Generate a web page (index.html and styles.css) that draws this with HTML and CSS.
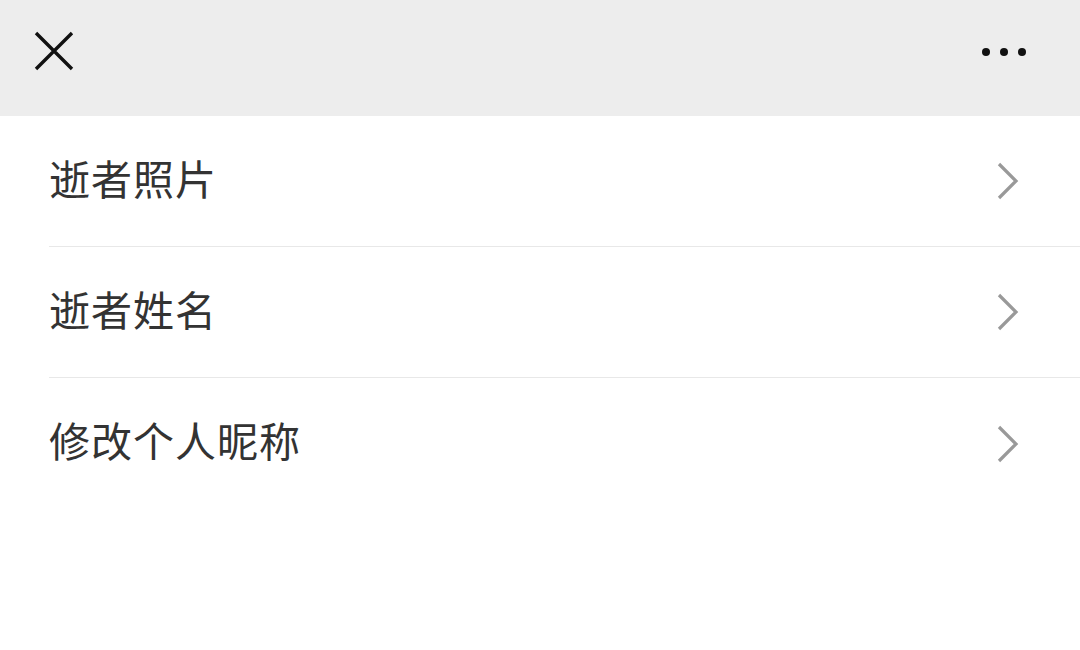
FILE: index.html
```html
<!DOCTYPE html>
<html lang="zh-CN">
<head>
  <meta charset="UTF-8">
  <meta name="viewport" content="width=device-width, initial-scale=1.0">
  <title>设置</title>
  <link rel="stylesheet" href="styles.css">
</head>
<body>
  <div class="topbar">
    <button class="close-btn" aria-label="关闭">
      <svg width="40" height="40" viewBox="0 0 40 40">
        <path d="M2 2 L38 38 M38 2 L2 38" stroke="#111" stroke-width="3.4" fill="none"/>
      </svg>
    </button>
    <button class="more-btn" aria-label="更多">
      <span class="dot"></span><span class="dot"></span><span class="dot"></span>
    </button>
  </div>

  <ul class="menu">
    <li class="menu-item">
      <span class="label">逝者照片</span>
      <svg class="arrow" width="24" height="38" viewBox="0 0 24 38">
        <path d="M3 2 L20 19 L3 36" stroke="#999" stroke-width="3.2" fill="none"/>
      </svg>
    </li>
    <li class="menu-item">
      <span class="label">逝者姓名</span>
      <svg class="arrow" width="24" height="38" viewBox="0 0 24 38">
        <path d="M3 2 L20 19 L3 36" stroke="#999" stroke-width="3.2" fill="none"/>
      </svg>
    </li>
    <li class="menu-item">
      <span class="label">修改个人昵称</span>
      <svg class="arrow" width="24" height="38" viewBox="0 0 24 38">
        <path d="M3 2 L20 19 L3 36" stroke="#999" stroke-width="3.2" fill="none"/>
      </svg>
    </li>
  </ul>
</body>
</html>
```

FILE: styles.css
```css
* {
  box-sizing: border-box;
  margin: 0;
  padding: 0;
}

body {
  font-family: "Noto Sans CJK SC", "Noto Sans", sans-serif;
  background: #fff;
  color: #333;
  width: 1080px;
  height: 650px;
  overflow: hidden;
}

.topbar {
  height: 116px;
  background: #ededed;
  display: flex;
  justify-content: space-between;
  align-items: center;
  padding: 0 54px 0 34px;
}

.topbar button {
  background: none;
  border: none;
  cursor: pointer;
}

.close-btn {
  display: flex;
  margin-top: -14px;
}

.more-btn {
  display: flex;
  gap: 10px;
  margin-top: -12px;
}

.dot {
  width: 8px;
  height: 8px;
  border-radius: 50%;
  background: #111;
}

.menu {
  list-style: none;
  padding-left: 49px;
}

.menu-item {
  height: 131px;
  display: flex;
  align-items: center;
  justify-content: space-between;
  padding-right: 60px;
  border-bottom: 1px solid #e8e8e8;
}

.menu-item:last-child {
  border-bottom: none;
}

.label {
  font-size: 41px;
  letter-spacing: 1px;
  line-height: 1;
  margin-top: -8px;
}

.arrow {
  flex-shrink: 0;
}
```
